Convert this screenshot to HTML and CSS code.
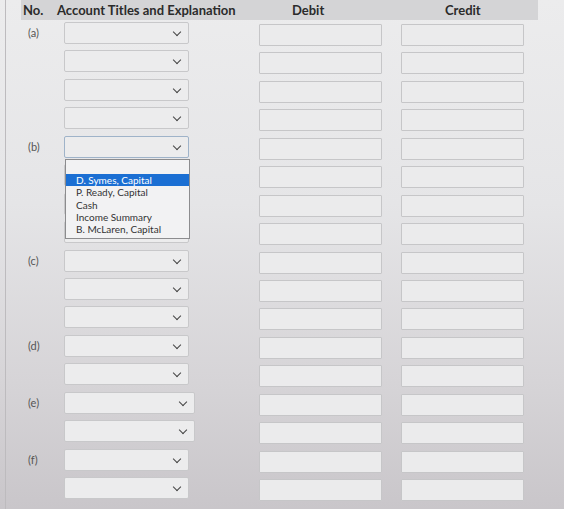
FILE: index.html
```html
<!DOCTYPE html>
<html>
<head>
<meta charset="utf-8">
<link rel="stylesheet" href="styles.css">
</head>
<body>
<div class="page">
  <div class="head">
    <div class="h-no">No.</div>
    <div class="h-acc">Account Titles and Explanation</div>
    <div class="h-deb">Debit</div>
    <div class="h-cred">Credit</div>
  </div>
  <div class="rows">
    <div class="row"><div class="lbl">(a)</div><div class="sel"><span class="chev"></span></div><div class="inp deb"></div><div class="inp cred"></div></div>
    <div class="row"><div class="lbl"></div><div class="sel"><span class="chev"></span></div><div class="inp deb"></div><div class="inp cred"></div></div>
    <div class="row"><div class="lbl"></div><div class="sel"><span class="chev"></span></div><div class="inp deb"></div><div class="inp cred"></div></div>
    <div class="row"><div class="lbl"></div><div class="sel"><span class="chev"></span></div><div class="inp deb"></div><div class="inp cred"></div></div>

    <div class="row"><div class="lbl">(b)</div>
      <div class="sel open"><span class="chev"></span>
        <ul class="menu">
          <li class="blank">&nbsp;</li>
          <li class="hl">D. Symes, Capital</li>
          <li>P. Ready, Capital</li>
          <li>Cash</li>
          <li>Income Summary</li>
          <li>B. McLaren, Capital</li>
        </ul>
      </div>
      <div class="inp deb"></div><div class="inp cred"></div></div>
    <div class="row"><div class="lbl"></div><div class="sel"><span class="chev"></span></div><div class="inp deb"></div><div class="inp cred"></div></div>
    <div class="row"><div class="lbl"></div><div class="sel"><span class="chev"></span></div><div class="inp deb"></div><div class="inp cred"></div></div>
    <div class="row"><div class="lbl"></div><div class="sel"><span class="chev"></span></div><div class="inp deb"></div><div class="inp cred"></div></div>

    <div class="row"><div class="lbl">(c)</div><div class="sel"><span class="chev"></span></div><div class="inp deb"></div><div class="inp cred"></div></div>
    <div class="row"><div class="lbl"></div><div class="sel"><span class="chev"></span></div><div class="inp deb"></div><div class="inp cred"></div></div>
    <div class="row"><div class="lbl"></div><div class="sel"><span class="chev"></span></div><div class="inp deb"></div><div class="inp cred"></div></div>

    <div class="row"><div class="lbl">(d)</div><div class="sel"><span class="chev"></span></div><div class="inp deb"></div><div class="inp cred"></div></div>
    <div class="row"><div class="lbl"></div><div class="sel"><span class="chev"></span></div><div class="inp deb"></div><div class="inp cred"></div></div>

    <div class="row"><div class="lbl">(e)</div><div class="sel wide"><span class="chev"></span></div><div class="inp deb"></div><div class="inp cred"></div></div>
    <div class="row"><div class="lbl"></div><div class="sel wide"><span class="chev"></span></div><div class="inp deb"></div><div class="inp cred"></div></div>

    <div class="row"><div class="lbl">(f)</div><div class="sel"><span class="chev"></span></div><div class="inp deb"></div><div class="inp cred"></div></div>
    <div class="row"><div class="lbl"></div><div class="sel"><span class="chev"></span></div><div class="inp deb"></div><div class="inp cred"></div></div>
  </div>
</div>
</body>
</html>
```

FILE: styles.css
```css
html, body {
  margin: 0;
  padding: 0;
}
body {
  width: 564px;
  height: 509px;
  overflow: hidden;
  font-family: Lato, "Liberation Sans", sans-serif;
  background: linear-gradient(180deg, #ececed 0%, #e5e5e7 40%, #d6d4d7 75%, #c9c6ca 100%);
}
.page {
  position: relative;
  height: 509px;
  border-left: 1px solid #bdbbbe;
  margin-left: 5px;
  box-sizing: border-box;
}
.head {
  margin-left: 15px;
  width: 517px;
  height: 20px;
  background: #d4d4d6;
  display: flex;
  align-items: center;
  font-weight: 700;
  font-size: 13px;
  color: #2b2b2b;
}
.h-no { width: 34px; padding-left: 2px; }
.h-acc { width: 196px; }
.h-deb { width: 84px; padding-left: 39px; }
.h-cred { padding-left: 69px; }

.rows {
  padding-top: 2px;
}
.row {
  height: 28.45px;
  display: flex;
  align-items: flex-start;
}
.lbl {
  width: 36px;
  flex: none;
  font-size: 11px;
  color: #555;
  padding-left: 22px;
  line-height: 22px;
}
.sel {
  position: relative;
  flex: none;
  width: 125px;
  height: 22px;
  box-sizing: border-box;
  border: 1px solid #c8c8ca;
  border-radius: 2px;
  background: #ececed;
}
.sel.wide { width: 131px; margin-right: -6px; }
.sel.open { border-color: #9fb3c9; }
.chev {
  position: absolute;
  right: 8px;
  top: 6px;
  width: 5px;
  height: 5px;
  border-right: 1.6px solid #444;
  border-bottom: 1.6px solid #444;
  transform: rotate(45deg);
}
.inp {
  flex: none;
  width: 123px;
  height: 22px;
  box-sizing: border-box;
  border: 1px solid #c6c6c8;
  border-radius: 1px;
  background: #ebebec;
  margin-top: 2px;
}
.inp.deb { margin-left: 70px; }
.inp.cred { margin-left: 19px; }
.menu {
  position: absolute;
  left: 0;
  top: 22px;
  width: 125px;
  margin: 0;
  padding: 0 0 2px 0;
  list-style: none;
  background: #f2f2f3;
  border: 1px solid #8c8c8e;
  box-sizing: border-box;
  z-index: 5;
  font-size: 10px;
  color: #333;
}
.menu li {
  height: 12.4px;
  line-height: 12.4px;
  padding-left: 10px;
  white-space: nowrap;
}
.menu li.blank { height: 14px; }
.menu li.hl {
  background: #1b6fd3;
  color: #fff;
}
```
